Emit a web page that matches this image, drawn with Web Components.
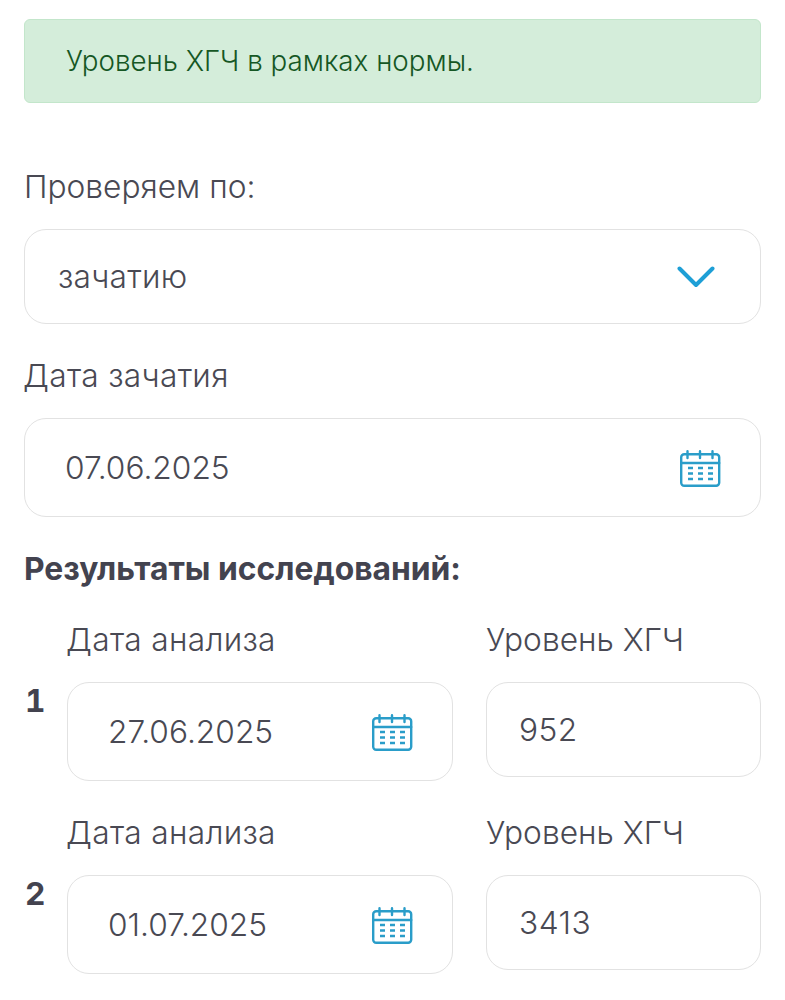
<!DOCTYPE html>
<html><head><meta charset="utf-8">
<style>
html,body{margin:0;padding:0;background:#fff}
body{font-family:Inter,"Noto Sans",sans-serif;font-weight:300;color:#494953;width:785px;height:1000px;overflow:hidden}
</style></head><body>
<hcg-form>
<hcg-alert>Уровень ХГЧ в рамках нормы.</hcg-alert>
<hcg-label style="margin-top:66px">Проверяем по:</hcg-label>
<hcg-field kind="select" style="margin-top:24px" value="зачатию"></hcg-field>
<hcg-label style="margin-top:34px;margin-left:-1px;letter-spacing:.3px">Дата зачатия</hcg-label>
<hcg-field kind="date" style="margin-top:24px" value="07.06.2025"></hcg-field>
<hcg-heading>Результаты исследований:</hcg-heading>
<hcg-row n="1" date="27.06.2025" level="952" style="margin-top:35px"></hcg-row>
<hcg-row n="2" date="01.07.2025" level="3413" style="margin-top:34px"></hcg-row>
</hcg-form>
<script>
const def=(name,css,html)=>customElements.define(name,class extends HTMLElement{
  connectedCallback(){
    if(this.shadowRoot)return;
    const r=this.attachShadow({mode:'open'});
    r.innerHTML='<style>'+css+'</style>'+(typeof html==='function'?html(this):html);
  }
});
const CAL=`<svg width="41" height="38" viewBox="0 0 41 38" fill="none" stroke="#2a9dc9" stroke-width="2.4" stroke-linecap="round"><rect x="1.2" y="4.2" width="38" height="31.6" rx="3"/><path d="M1.2 13H39.2M7.5 1.2V8M20 1.2V8M32.5 1.2V8"/><path stroke-width="2.4" stroke-linecap="butt" d="M8 18h5M18 18h5M28 18h5M8 23.5h5M18 23.5h5M28 23.5h5M8 29h5M18 29h5M28 29h5"/></svg>`;
const CHEV=`<svg width="38" height="22" viewBox="0 0 38 22" fill="none" stroke="#1e9fd6" stroke-width="4" stroke-linecap="round" stroke-linejoin="round"><path d="M2.5 2.5L19 19L35.5 2.5"/></svg>`;
def('hcg-form',':host{display:block;padding:19px 24px 0}','<slot></slot>');
def('hcg-alert',':host{display:block;box-sizing:border-box;height:84px;background:#d4edda;border:1px solid #c3e6cb;border-radius:6px;color:#155724;font-size:27.75px;line-height:82px;padding-left:41px;white-space:nowrap}','<slot></slot>');
def('hcg-label',':host{display:block;font-size:31.7px;line-height:36px;height:36px;white-space:nowrap}','<slot></slot>');
def('hcg-heading',':host{display:block;margin-top:34px;font-size:31.8px;font-weight:700;line-height:36px;height:36px;white-space:nowrap;color:#43434f}','<slot></slot>');
def('hcg-field',`:host{display:block;box-sizing:border-box;background:#fff;border:1.5px solid #e2e2e2;border-radius:22px}
.b{display:flex;align-items:center;justify-content:space-between;height:100%;font-size:31.7px;white-space:nowrap}
:host([kind=select]){height:95px}:host([kind=date]){height:99px}:host([kind=text]){height:95px}
:host([kind=select]) .b{padding:0 45px 0 33px;letter-spacing:.25px}
:host([kind=date]) .b{padding:0 39px 0 40px}
:host([kind=date]) svg{margin-top:2px}
:host([kind=text]) .b{padding:0 32px;letter-spacing:.5px}`,el=>{
  const k=el.getAttribute('kind');
  return `<div class="b"><span>${el.getAttribute('value')}</span>${k==='select'?CHEV:k==='date'?CAL:''}</div>`;
});
def('hcg-row',`:host{display:grid;grid-template-columns:43px 386px 308px;column-gap:0;}
.n{grid-column:1;grid-row:2;font-size:31.7px;font-weight:700;line-height:36px;margin-top:25px;color:#43434f;padding-left:1px;font-variant-numeric:tabular-nums}
.l{font-size:31.7px;line-height:36px;height:36px;white-space:nowrap}
.l1{margin-left:-1px;letter-spacing:.3px}
.l2{margin-left:33px}
hcg-field{margin-top:24px;align-self:start}
.f2{margin-left:33px}
.d{grid-column:2;grid-row:2}.v{grid-column:3;grid-row:2}`,el=>`
<div></div><div class="l l1">Дата анализа</div><div class="l l2">Уровень ХГЧ</div>
<div class="n">${el.getAttribute('n')}</div>
<hcg-field class="d" kind="date" value="${el.getAttribute('date')}"></hcg-field>
<hcg-field class="v f2" kind="text" value="${el.getAttribute('level')}"></hcg-field>`);
</script>
</body></html>
